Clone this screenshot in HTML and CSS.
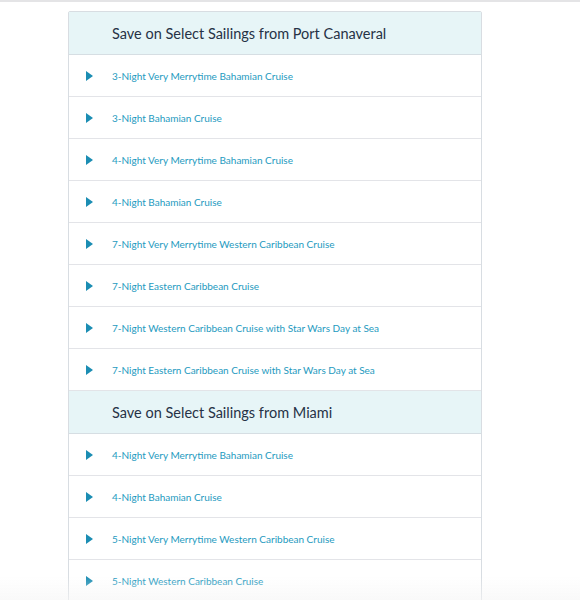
FILE: index.html
```html
<!DOCTYPE html>
<html>
<head>
<meta charset="utf-8">
<link rel="stylesheet" href="styles.css">
</head>
<body>
<div class="topline"></div>
<div class="card">
  <div class="head">Save on Select Sailings from Port Canaveral</div>
  <div class="row"><span class="tri"></span><span class="label">3-Night Very Merrytime Bahamian Cruise</span></div>
  <div class="row"><span class="tri"></span><span class="label">3-Night Bahamian Cruise</span></div>
  <div class="row"><span class="tri"></span><span class="label">4-Night Very Merrytime Bahamian Cruise</span></div>
  <div class="row"><span class="tri"></span><span class="label">4-Night Bahamian Cruise</span></div>
  <div class="row"><span class="tri"></span><span class="label">7-Night Very Merrytime Western Caribbean Cruise</span></div>
  <div class="row"><span class="tri"></span><span class="label">7-Night Eastern Caribbean Cruise</span></div>
  <div class="row"><span class="tri"></span><span class="label">7-Night Western Caribbean Cruise with Star Wars Day at Sea</span></div>
  <div class="row"><span class="tri"></span><span class="label">7-Night Eastern Caribbean Cruise with Star Wars Day at Sea</span></div>
  <div class="head">Save on Select Sailings from Miami</div>
  <div class="row"><span class="tri"></span><span class="label">4-Night Very Merrytime Bahamian Cruise</span></div>
  <div class="row"><span class="tri"></span><span class="label">4-Night Bahamian Cruise</span></div>
  <div class="row"><span class="tri"></span><span class="label">5-Night Very Merrytime Western Caribbean Cruise</span></div>
  <div class="row"><span class="tri"></span><span class="label">5-Night Western Caribbean Cruise</span></div>
</div>
<div class="fade"></div>
</body>
</html>
```
FILE: styles.css
```css
html, body {
  margin: 0;
  padding: 0;
  background: #fff;
  overflow: hidden;
  height: 600px;
}
body {
  font-family: Lato, "Noto Sans", sans-serif;
}
.topline {
  height: 2px;
  background: #e4e4e6;
}
.card {
  margin: 9px 0 0 68px;
  width: 412px;
  border: 1px solid #d8dde2;
  border-radius: 2px;
}
.head {
  height: 42px;
  background: #e7f5f7;
  border-bottom: 1px solid #d6dee3;
  display: flex;
  align-items: center;
  padding-left: 43px;
  font-size: 14.5px;
  color: #263246;
}
.row {
  height: 41px;
  border-bottom: 1px solid #e3e4e8;
  display: flex;
  align-items: center;
  padding-left: 17px;
}
.tri {
  width: 0;
  height: 0;
  border-top: 5px solid transparent;
  border-bottom: 5px solid transparent;
  border-left: 7px solid #1b8db3;
  margin-right: 19px;
}
.label {
  font-size: 10px;
  color: #1e9ac0;
}
.fade {
  position: fixed;
  left: 0;
  right: 0;
  bottom: 0;
  height: 24px;
  background: linear-gradient(to bottom, rgba(245,245,245,0), rgba(245,245,245,0.6));
}
```
